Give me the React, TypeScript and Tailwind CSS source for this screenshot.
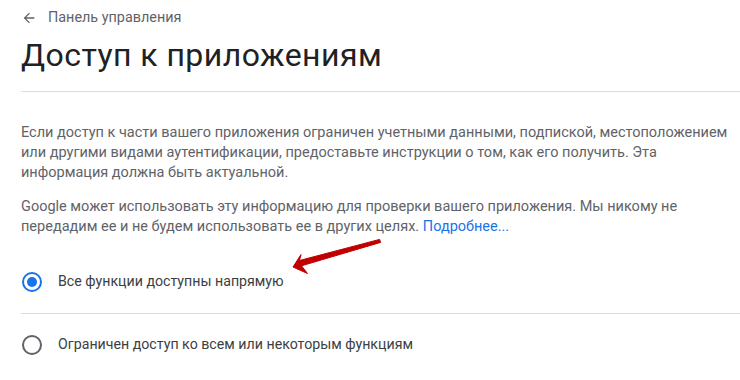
import React from 'react';

const Radio: React.FC<{ checked?: boolean }> = ({ checked }) => (
    <span
        className={`flex items-center justify-center w-[20px] h-[20px] rounded-full border-2 ${checked ? 'border-[#1a73e8]' : 'border-[#5f6368]'}`}
    >
        {checked && <span className="block w-[10px] h-[10px] rounded-full bg-[#1a73e8]" />}
    </span>
);

const Option: React.FC<{ checked?: boolean; label: string }> = ({ checked, label }) => (
    <label className="flex items-center gap-[16px] pl-[1px] h-[30px]">
        <Radio checked={checked} />
        <span className="text-[14.2px] text-[#3c4043]">{label}</span>
    </label>
);

export default function App() {
    return (
        <div className="relative w-[740px] h-[380px] overflow-hidden bg-white font-['Roboto',sans-serif]">
            <div className="pl-[21px]">
                <div className="flex items-center gap-[11px] pt-[9px] h-[27px] text-[#5f6368]">
                    <svg width="16" height="16" viewBox="0 0 24 24" fill="currentColor">
                        <path d="M20 11H7.83l5.59-5.59L12 4l-8 8 8 8 1.41-1.41L7.83 13H20v-2z" />
                    </svg>
                    <span className="text-[14.4px]">Панель управления</span>
                </div>
                <h1 className="mt-[8px] text-[32px] leading-[40px] text-[#202124] tracking-[0.45px]">Доступ к приложениям</h1>
                <div className="mt-[16px] border-t border-[#dadce0]" />

                <div className="w-[712px] text-[14.5px] leading-[20px] text-[#5f6368]">
                    <p className="mt-[31px]">
                        Если доступ к части вашего приложения ограничен учетными данными, подпиской, местоположением или другими видами аутентификации, предоставьте инструкции о том, как его получить. Эта информация должна быть актуальной.
                    </p>
                    <p className="mt-[14px]">
                        Google может использовать эту информацию для проверки вашего приложения. Мы никому не передадим ее и не будем использовать ее в других целях.{' '}
                        <a className="text-[#1a73e8]">Подробнее...</a>
                    </p>
                </div>

                <div className="mt-[30px]">
                    <Option checked label="Все функции доступны напрямую" />
                </div>
                <div className="mt-[16px] border-t border-[#dadce0]" />
                <div className="mt-[16px]">
                    <Option label="Ограничен доступ ко всем или некоторым функциям" />
                </div>
            </div>

            {/* red annotation arrow over the page */}
            <svg className="absolute left-[290px] top-[238px]" width="93" height="38" viewBox="0 0 93 38">
                <polygon
                    points="3,29 11,16.5 9.5,22.5 89.6,1.4 90.6,4.4 11.5,27.8 17.5,35.5"
                    fill="#c00000"
                    stroke="#c00000"
                    strokeWidth="1"
                    strokeLinejoin="round"
                />
            </svg>
        </div>
    );
}
